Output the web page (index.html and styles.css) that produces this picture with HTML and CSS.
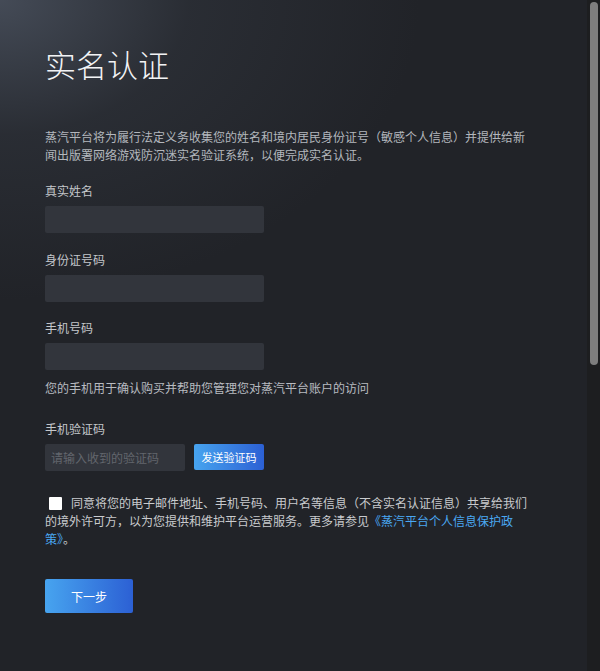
FILE: index.html
```html
<!DOCTYPE html>
<html lang="zh-CN">
<head>
<meta charset="utf-8">
<title>实名认证</title>
<link rel="stylesheet" href="styles.css">
</head>
<body>
<div class="window">
  <main class="page">
    <h1 class="title">实名认证</h1>
    <p class="intro">蒸汽平台将为履行法定义务收集您的姓名和境内居民身份证号（敏感个人信息）并提供给新闻出版署网络游戏防沉迷实名验证系统，以便完成实名认证。</p>

    <div class="field">
      <label class="label">真实姓名</label>
      <input class="input" type="text">
    </div>
    <div class="field">
      <label class="label">身份证号码</label>
      <input class="input" type="text">
    </div>
    <div class="field">
      <label class="label">手机号码</label>
      <input class="input" type="text">
      <p class="hint">您的手机用于确认购买并帮助您管理您对蒸汽平台账户的访问</p>
    </div>
    <div class="field field-code">
      <label class="label">手机验证码</label>
      <div class="code-row">
        <input class="input input-code" type="text" placeholder="请输入收到的验证码">
        <button class="btn btn-send" type="button">发送验证码</button>
      </div>
    </div>

    <p class="consent"><input class="check" type="checkbox">同意将您的电子邮件地址、手机号码、用户名等信息（不含实名认证信息）共享给我们的境外许可方，以为您提供和维护平台运营服务。更多请参见<a class="link" href="#">《蒸汽平台个人信息保护政策》</a>。</p>

    <button class="btn btn-next" type="button">下一步</button>
  </main>
  <div class="scrollbar"><div class="thumb"></div></div>
</div>
</body>
</html>
```

FILE: styles.css
```css
* { box-sizing: border-box; }

html, body {
  margin: 0;
  padding: 0;
  height: 100%;
}

body {
  font-family: "Noto Sans CJK SC", "Noto Sans", sans-serif;
  background: #202227;
  overflow: hidden;
}

.window {
  display: flex;
  height: 671px;
  background:
    radial-gradient(ellipse 420px 300px at 0 0, rgba(80, 88, 102, 0.75) 0%, rgba(52, 57, 66, 0.45) 45%, rgba(33, 35, 40, 0) 100%),
    #212328;
}

.page {
  flex: 1;
  padding: 44px 0 0 45px;
}

.title {
  margin: 0;
  font-size: 31px;
  line-height: 40px;
  font-weight: 300;
  color: #f2f3f5;
}

.intro {
  margin: 44px 0 0;
  width: 488px;
  font-size: 12px;
  line-height: 18px;
  color: #b3b7bd;
}

.field {
  margin-top: 18px;
  display: flex;
  flex-direction: column;
  align-items: flex-start;
}

.field + .field { margin-top: 17.5px; }

.label {
  display: block;
  font-size: 12px;
  line-height: 18px;
  color: #c4c7cb;
  margin-bottom: 6px;
}

.input {
  width: 219px;
  height: 27px;
  border: none;
  border-radius: 2px;
  background: #32353c;
  padding: 0 6px;
  font-family: inherit;
  font-size: 12px;
  color: #d0d2d6;
  outline: none;
}

.input::placeholder { color: #62666d; }

.hint {
  margin: 9px 0 0;
  font-size: 12px;
  line-height: 18px;
  color: #b8bbc0;
}

.field.field-code { margin-top: 23px; }

.code-row {
  display: flex;
  align-items: flex-start;
  gap: 9px;
}

.input-code { width: 140px; }

.btn {
  border: none;
  border-radius: 2px;
  color: #ffffff;
  font-family: inherit;
  cursor: pointer;
  background: linear-gradient(90deg, #47a4ef 0%, #2c60d4 100%);
  padding: 0;
}

.btn-send {
  width: 70px;
  height: 26px;
  font-size: 11px;
}

.consent {
  margin: 23px 0 0;
  width: 488px;
  font-size: 12px;
  line-height: 18px;
  color: #c9cbce;
}

.check {
  appearance: none;
  -webkit-appearance: none;
  display: inline-block;
  width: 13px;
  height: 13px;
  margin: 0 9px 0 4px;
  background: #ffffff;
  border-radius: 1px;
  vertical-align: -2px;
}

.link {
  color: #4aa8f2;
  text-decoration: none;
}

.btn-next {
  display: block;
  margin-top: 31px;
  width: 88px;
  height: 34px;
  font-size: 12px;
}

.scrollbar {
  width: 13px;
  flex: none;
  background: #1d1e20;
  padding: 2px 2px 0 3px;
}

.thumb {
  width: 8px;
  height: 363px;
  border-radius: 4px;
  background: #7e7e7e;
}
```
